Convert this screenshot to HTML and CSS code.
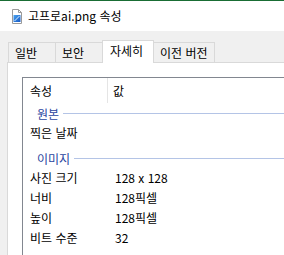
FILE: index.html
```html
<!DOCTYPE html>
<html lang="ko">
<head>
<meta charset="utf-8">
<link rel="stylesheet" href="styles.css">
</head>
<body>
<div class="titlebar">
  <svg class="ficon" width="10" height="15" viewBox="0 0 10 15">
    <path d="M0.5 0.5 H6.5 L9.5 3.5 V14.5 H0.5 Z" fill="#fff" stroke="#9a9a9a"/>
    <path d="M6.5 0.5 V3.5 H9.5" fill="none" stroke="#9a9a9a"/>
    <defs><linearGradient id="g" x1="0" y1="0" x2="1" y2="1"><stop offset="0" stop-color="#4aa3f0"/><stop offset="1" stop-color="#1759c4"/></linearGradient></defs>
    <rect x="1.5" y="6" width="7" height="7" fill="url(#g)"/>
    <path d="M2.5 12 L7.5 7" stroke="#dff0ff" stroke-width="1"/>
  </svg>
  <span class="title">고프로ai.png 속성</span>
</div>
<div class="main">
  <div class="tabs">
    <div class="tab w48">일반</div>
    <div class="tab w48">보안</div>
    <div class="tab sel">자세히</div>
    <div class="tab w62">이전 버전</div>
  </div>
  <div class="panel">
    <div class="list">
      <div class="hdr">
        <div class="hname">속성</div>
        <div class="hval">값</div>
      </div>
      <div class="group">
        <div class="ghead"><span>원본</span><i class="gline"></i></div>
        <div class="row"><span class="n">찍은 날짜</span><span class="v"></span></div>
      </div>
      <div class="group">
        <div class="ghead"><span>이미지</span><i class="gline"></i></div>
        <div class="row"><span class="n">사진 크기</span><span class="v">128 x 128</span></div>
        <div class="row"><span class="n">너비</span><span class="v">128픽셀</span></div>
        <div class="row"><span class="n">높이</span><span class="v">128픽셀</span></div>
        <div class="row"><span class="n">비트 수준</span><span class="v">32</span></div>
      </div>
    </div>
  </div>
</div>
</body>
</html>
```

FILE: styles.css
```css
html, body {
  margin: 0;
  padding: 0;
  width: 284px;
  height: 255px;
  overflow: hidden;
  background: #f0f0f0;
  font-family: "Noto Sans CJK KR", "Noto Sans", sans-serif;
  font-size: 12px;
  color: #000;
}
body {
  display: flex;
  flex-direction: column;
}
.titlebar {
  height: 31px;
  flex: none;
  box-sizing: border-box;
  border-top: 1px solid #196d34;
  background: #fff;
  display: flex;
  align-items: center;
  padding-left: 12px;
}
.ficon { display: block; }
.title {
  margin-left: 6px;
  line-height: 16px;
}
.main {
  flex: 1;
  min-height: 0;
  display: flex;
  flex-direction: column;
  padding: 9px 0 0 7px;
  background: #f0f0f0;
}
.tabs {
  flex: none;
  display: flex;
  align-items: flex-end;
  height: 22px;
  padding-left: 1px;
}
.tab {
  box-sizing: border-box;
  height: 20px;
  border: 1px solid #d9d9d9;
  border-bottom: none;
  background: #f0f0f0;
  margin-left: -1px;
  padding-left: 6px;
  line-height: 19px;
  white-space: nowrap;
}
.tab:first-child { margin-left: 0; }
.w48 { width: 48px; }
.w62 { width: 62px; }
.tab.sel {
  width: 52px;
  height: 23px;
  margin-bottom: -1px;
  background: #fff;
  padding-left: 7px;
  line-height: 20px;
  position: relative;
  z-index: 1;
}
.panel {
  flex: 1;
  min-height: 0;
  display: flex;
  flex-direction: column;
  border-top: 1px solid #d9d9d9;
  border-left: 1px solid #d9d9d9;
  background: #fff;
  padding: 14px 0 0 14px;
}
.list {
  flex: 1;
  border-left: 1px solid #828790;
  border-top: 1px solid #828790;
}
.hdr {
  display: flex;
  height: 25px;
  line-height: 25px;
}
.hname {
  box-sizing: border-box;
  width: 85px;
  padding-left: 7px;
  border-right: 1px solid #e5e5e5;
}
.hval { padding-left: 5px; }
.group + .group { margin-top: 5px; }
.ghead {
  display: flex;
  align-items: center;
  height: 20px;
  padding-left: 14px;
  color: #2a46a0;
}
.gline {
  flex: 1;
  height: 1px;
  background: #b4c4e6;
  margin-left: 4px;
}
.row {
  display: flex;
  height: 20px;
  line-height: 20px;
}
.n {
  box-sizing: border-box;
  width: 92px;
  padding-left: 7px;
}
```
